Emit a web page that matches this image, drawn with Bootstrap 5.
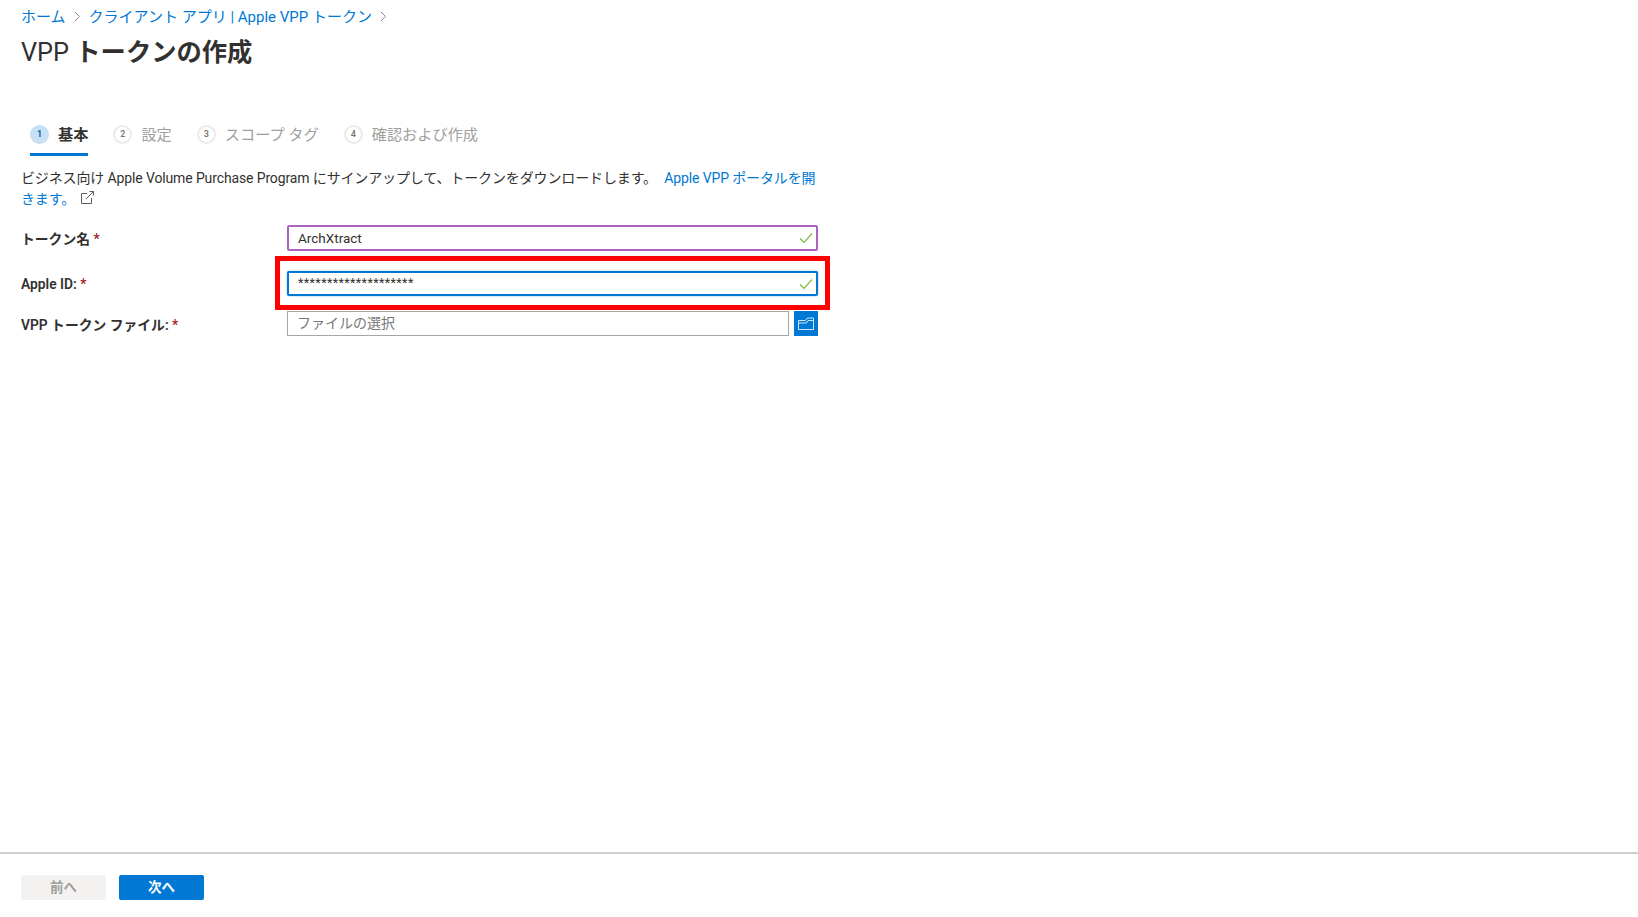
<!DOCTYPE html>
<html lang="ja">
<head>
<meta charset="utf-8">
<title>VPP トークンの作成</title>
<link href="https://cdn.jsdelivr.net/npm/bootstrap@5.3.0/dist/css/bootstrap.min.css" rel="stylesheet">
<style>
html,body{height:917px;overflow:hidden;background:#fff}
body{font-family:Roboto,"Noto Sans CJK JP",sans-serif;font-size:14px;color:#323130}
a{color:#0078d4;text-decoration:none}
.shell{height:917px}
.crumbs{padding:5px 21px 0;height:28px;font-size:15px;line-height:22px;gap:8px}
.crumbs svg{flex:none}
.page-title{margin:7px 0 0 21px;height:36px;font-size:25.3px;line-height:36px;font-weight:600;color:#323130}
.page-title span{font-weight:400}
.steps{margin:51px 0 0 30px;gap:25px;height:34px}
.step{height:34px;gap:9px;font-size:15.2px;line-height:20px;color:#a19f9d;align-items:center;padding-bottom:6px;border-bottom:3px solid transparent}
.step.on{color:#323130;font-weight:600;border-bottom-color:#0078d4}
.dot{width:19px;height:19px;border-radius:50%;border:2px solid #edebe9;font-size:9px;font-weight:600;line-height:1;color:#797775;display:flex;align-items:center;justify-content:center}
.on .dot{background:#c7e0f4;border-color:#c7e0f4;color:#005a9e}
.intro{width:800px;margin:12px 0 0 21px;line-height:20.5px;height:41px;letter-spacing:-.13px}
.intro svg{margin-left:5px;vertical-align:-1px}
.fields{margin:16px 0 0 21px;width:797px}
.fld{position:relative;align-items:center}
.fld1{height:26px}
.fld2{height:25px;margin-top:20px}
.fld3{height:25px;margin-top:15px}
.lbl{width:266px;font-weight:600;font-size:13.8px;line-height:20px;color:#323130;flex:none}
.fld1 .lbl{padding-top:2px}
.fld3 .lbl{padding-top:3px}
.req{color:#a4262c}
.box{position:relative;flex:1;height:100%;border:2px solid #8a8886;border-radius:2px;padding-left:9px;display:flex;align-items:center;font-size:13.5px;background:#fff}
.fld1 .box{border-color:#a864c0}
.fld2 .box{border-color:#0078d4;box-shadow:0 0 2px #7db8e8}
.fld3 .box{border-color:#a8a6a4;border-width:1.5px;color:#797775;font-size:14px;border-radius:0;margin-right:5px}
.tick{position:absolute;right:3px;top:50%;transform:translateY(-50%)}
.pick{width:24px;height:25px;background:#0078d4;display:flex;align-items:center;justify-content:center;flex:none}
.stars{font-size:12.5px;letter-spacing:.4px;line-height:1}
.redbox{position:absolute;left:254px;right:-12px;top:-15px;bottom:-14px;border:5px solid #f00;pointer-events:none}
.foot{border-top:2px solid #cfcfcf;height:65px;padding:21px 0 0 21px;gap:13px}
.fbtn{width:85px;height:25px;border:0;border-radius:2px;font-size:13.5px;font-weight:600;padding:0;line-height:25px}
.fbtn.off{background:#f3f2f1;color:#a19f9d;opacity:1}
.fbtn.go{background:#0078d4;color:#fff}
</style>
</head>
<body>
<div class="shell d-flex flex-column">
  <div class="flex-grow-1">
    <nav class="crumbs d-flex align-items-center">
      <a href="#">ホーム</a>
      <svg width="7" height="11" viewBox="0 0 7 11"><path d="M1 1l4.5 4.5L1 10" fill="none" stroke="#8a8886"/></svg>
      <a href="#">クライアント アプリ | Apple VPP トークン</a>
      <svg width="7" height="11" viewBox="0 0 7 11"><path d="M1 1l4.5 4.5L1 10" fill="none" stroke="#8a8886"/></svg>
    </nav>
    <h1 class="page-title"><span>VPP</span> トークンの作成</h1>
    <div class="steps d-flex">
      <div class="step on d-flex"><span class="dot">1</span><span>基本</span></div>
      <div class="step d-flex"><span class="dot">2</span><span>設定</span></div>
      <div class="step d-flex"><span class="dot">3</span><span>スコープ タグ</span></div>
      <div class="step d-flex"><span class="dot">4</span><span>確認および作成</span></div>
    </div>
    <p class="intro">ビジネス向け Apple Volume Purchase Program にサインアップして、トークンをダウンロードします。 <a href="#" class="ms-1">Apple VPP ポータルを開きます。</a><svg width="15" height="15" viewBox="0 0 15 15" fill="none" stroke="#605e5c"><path d="M7 3.5H1.5v10h10V8M6 9l7.5-7.5M9.5 1.5h4v4"/></svg></p>
    <div class="fields">
      <div class="fld fld1 d-flex">
        <div class="lbl">トークン名 <span class="req">*</span></div>
        <div class="box">ArchXtract<svg class="tick" width="14" height="11" viewBox="0 0 14 11"><path d="M1 6l4 4 8-9" fill="none" stroke="#7fba3c" stroke-width="1.2"/></svg></div>
      </div>
      <div class="fld fld2 d-flex">
        <div class="lbl">Apple ID: <span class="req">*</span></div>
        <div class="box"><span class="stars">********************</span><svg class="tick" width="14" height="11" viewBox="0 0 14 11"><path d="M1 6l4 4 8-9" fill="none" stroke="#7fba3c" stroke-width="1.2"/></svg></div>
        <div class="redbox"></div>
      </div>
      <div class="fld fld3 d-flex">
        <div class="lbl">VPP トークン ファイル: <span class="req">*</span></div>
        <div class="box">ファイルの選択</div>
        <div class="pick"><svg width="16" height="13" viewBox="0 0 16 13" fill="none" stroke="#cfe4f7"><path d="M.5 3.5h7l2-2.5h6v11.5H.5zM.5 6h8l1.5-2.5h6"/></svg></div>
      </div>
    </div>
  </div>
  <footer class="foot d-flex">
    <button class="btn fbtn off" disabled>前へ</button>
    <button class="btn fbtn go">次へ</button>
  </footer>
</div>
<script src="https://cdn.jsdelivr.net/npm/bootstrap@5.3.0/dist/js/bootstrap.bundle.min.js"></script>
</body>
</html>
